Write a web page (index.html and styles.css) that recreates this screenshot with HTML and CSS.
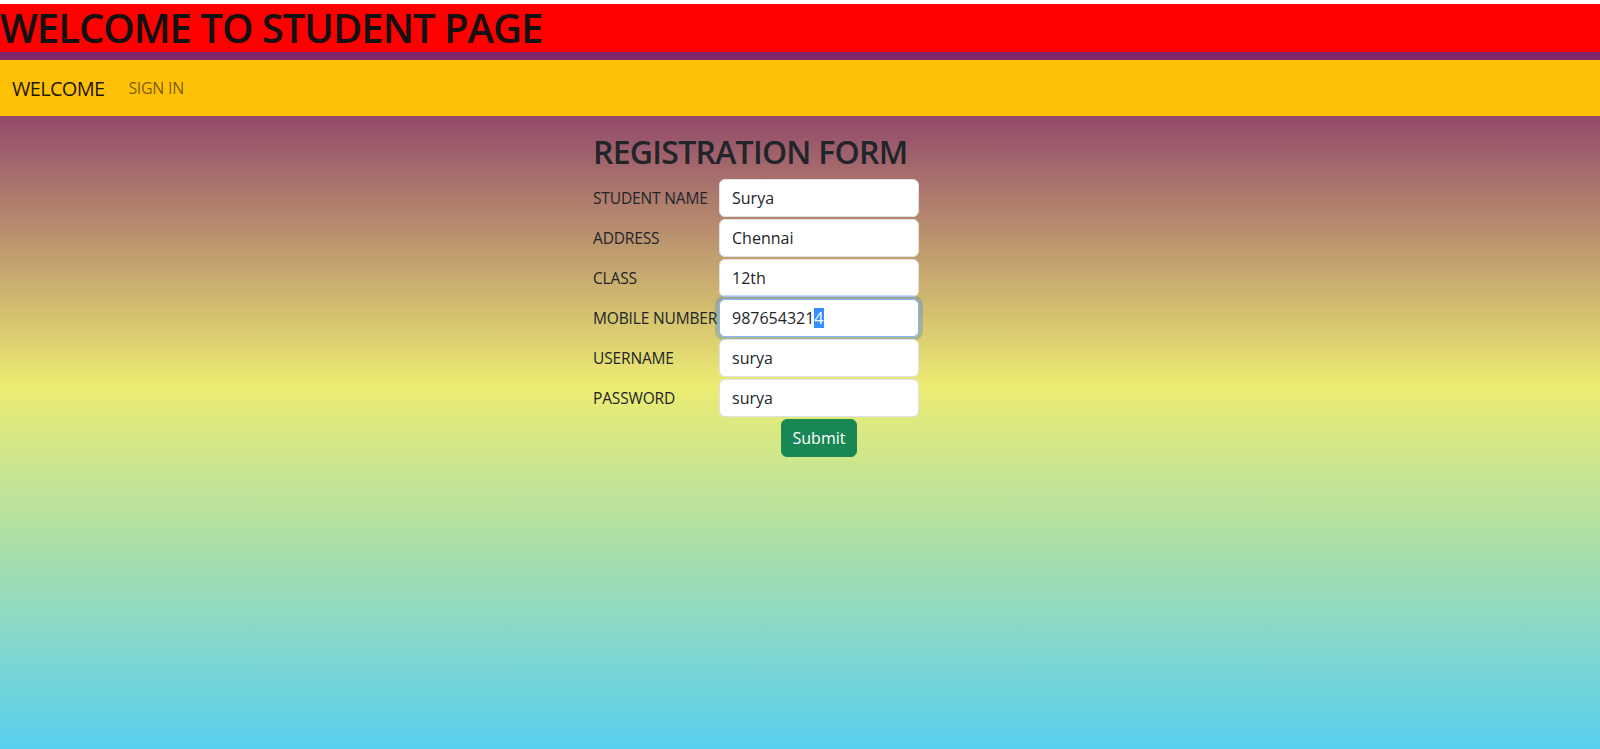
FILE: index.html
```html
<!DOCTYPE html>
<html lang="en">
<head>
<meta charset="utf-8">
<title>Student Page</title>
<link rel="stylesheet" href="styles.css">
</head>
<body>
<div class="topgap"></div>
<h1 class="banner">WELCOME TO STUDENT PAGE</h1>
<nav class="navbar">
  <a class="brand" href="#">WELCOME</a>
  <a class="nav-link" href="#">SIGN IN</a>
</nav>
<main class="main">
  <section class="form-box">
    <h2 class="form-title">REGISTRATION FORM</h2>
    <form class="form-grid">
      <label class="label">STUDENT NAME</label>
      <div class="input">Surya</div>
      <label class="label">ADDRESS</label>
      <div class="input">Chennai</div>
      <label class="label">CLASS</label>
      <div class="input">12th</div>
      <label class="label">MOBILE NUMBER</label>
      <div class="input focus">987654321<span class="sel">4</span></div>
      <label class="label">USERNAME</label>
      <div class="input">surya</div>
      <label class="label">PASSWORD</label>
      <div class="input">surya</div>
      <div class="btn-cell"><button type="button" class="btn">Submit</button></div>
    </form>
  </section>
</main>
</body>
</html>
```

FILE: styles.css
```css
html {
  height: 100%;
  background: linear-gradient(to bottom, #6c0468 0%, #ecec72 51.5%, #58cff0 100%);
}
body {
  margin: 0;
  min-height: 100%;
  font-family: "Open Sans", "Noto Sans", sans-serif;
  color: #212529;
}
.topgap {
  height: 4px;
  background: #ffffff;
}
.banner {
  margin: 0 0 8px 0;
  background: #ff0000;
  color: #111111;
  font-size: 40px;
  font-weight: 600;
  line-height: 48px;
  letter-spacing: -1px;
}
.navbar {
  display: flex;
  align-items: center;
  height: 56px;
  padding: 0 12px;
  background: #ffc107;
  gap: 24px;
}
.brand {
  font-size: 20px;
  color: rgba(0, 0, 0, 0.9);
  text-decoration: none;
  letter-spacing: -0.7px;
}
.nav-link {
  font-size: 16px;
  color: rgba(0, 0, 0, 0.55);
  text-decoration: none;
  letter-spacing: -0.3px;
}
.main {
  padding: 17px 0 0 593px;
}
.form-box {
  display: flex;
  flex-direction: column;
  align-items: flex-start;
}
.form-title {
  margin: 0 0 8px 0;
  font-size: 32px;
  font-weight: 600;
  line-height: 38.4px;
  color: #212529;
  letter-spacing: -0.75px;
}
.form-grid {
  display: grid;
  grid-template-columns: 124px 200px;
  column-gap: 2px;
  row-gap: 2px;
  align-items: center;
}
.label {
  font-size: 15.5px;
  color: #212529;
  white-space: nowrap;
  letter-spacing: -0.15px;
}
.input {
  box-sizing: border-box;
  height: 38px;
  padding: 0 12px;
  display: flex;
  align-items: center;
  background: #ffffff;
  border: 1px solid #dee2e6;
  border-radius: 6px;
  font-size: 16px;
  color: #212529;
}
.input.focus {
  border-color: #86b7fe;
  box-shadow: 0 0 0 4px rgba(13, 110, 253, 0.25);
}
.sel {
  background: #3390ff;
  color: #ffffff;
  line-height: 20px;
}
.btn-cell {
  grid-column: 2;
  display: flex;
  justify-content: center;
}
.btn {
  box-sizing: border-box;
  height: 38px;
  width: 76px;
  padding: 0;
  background: #198754;
  color: #ffffff;
  border: 1px solid #198754;
  border-radius: 6px;
  font-family: "Open Sans", "Noto Sans", sans-serif;
  font-size: 16px;
}
```
